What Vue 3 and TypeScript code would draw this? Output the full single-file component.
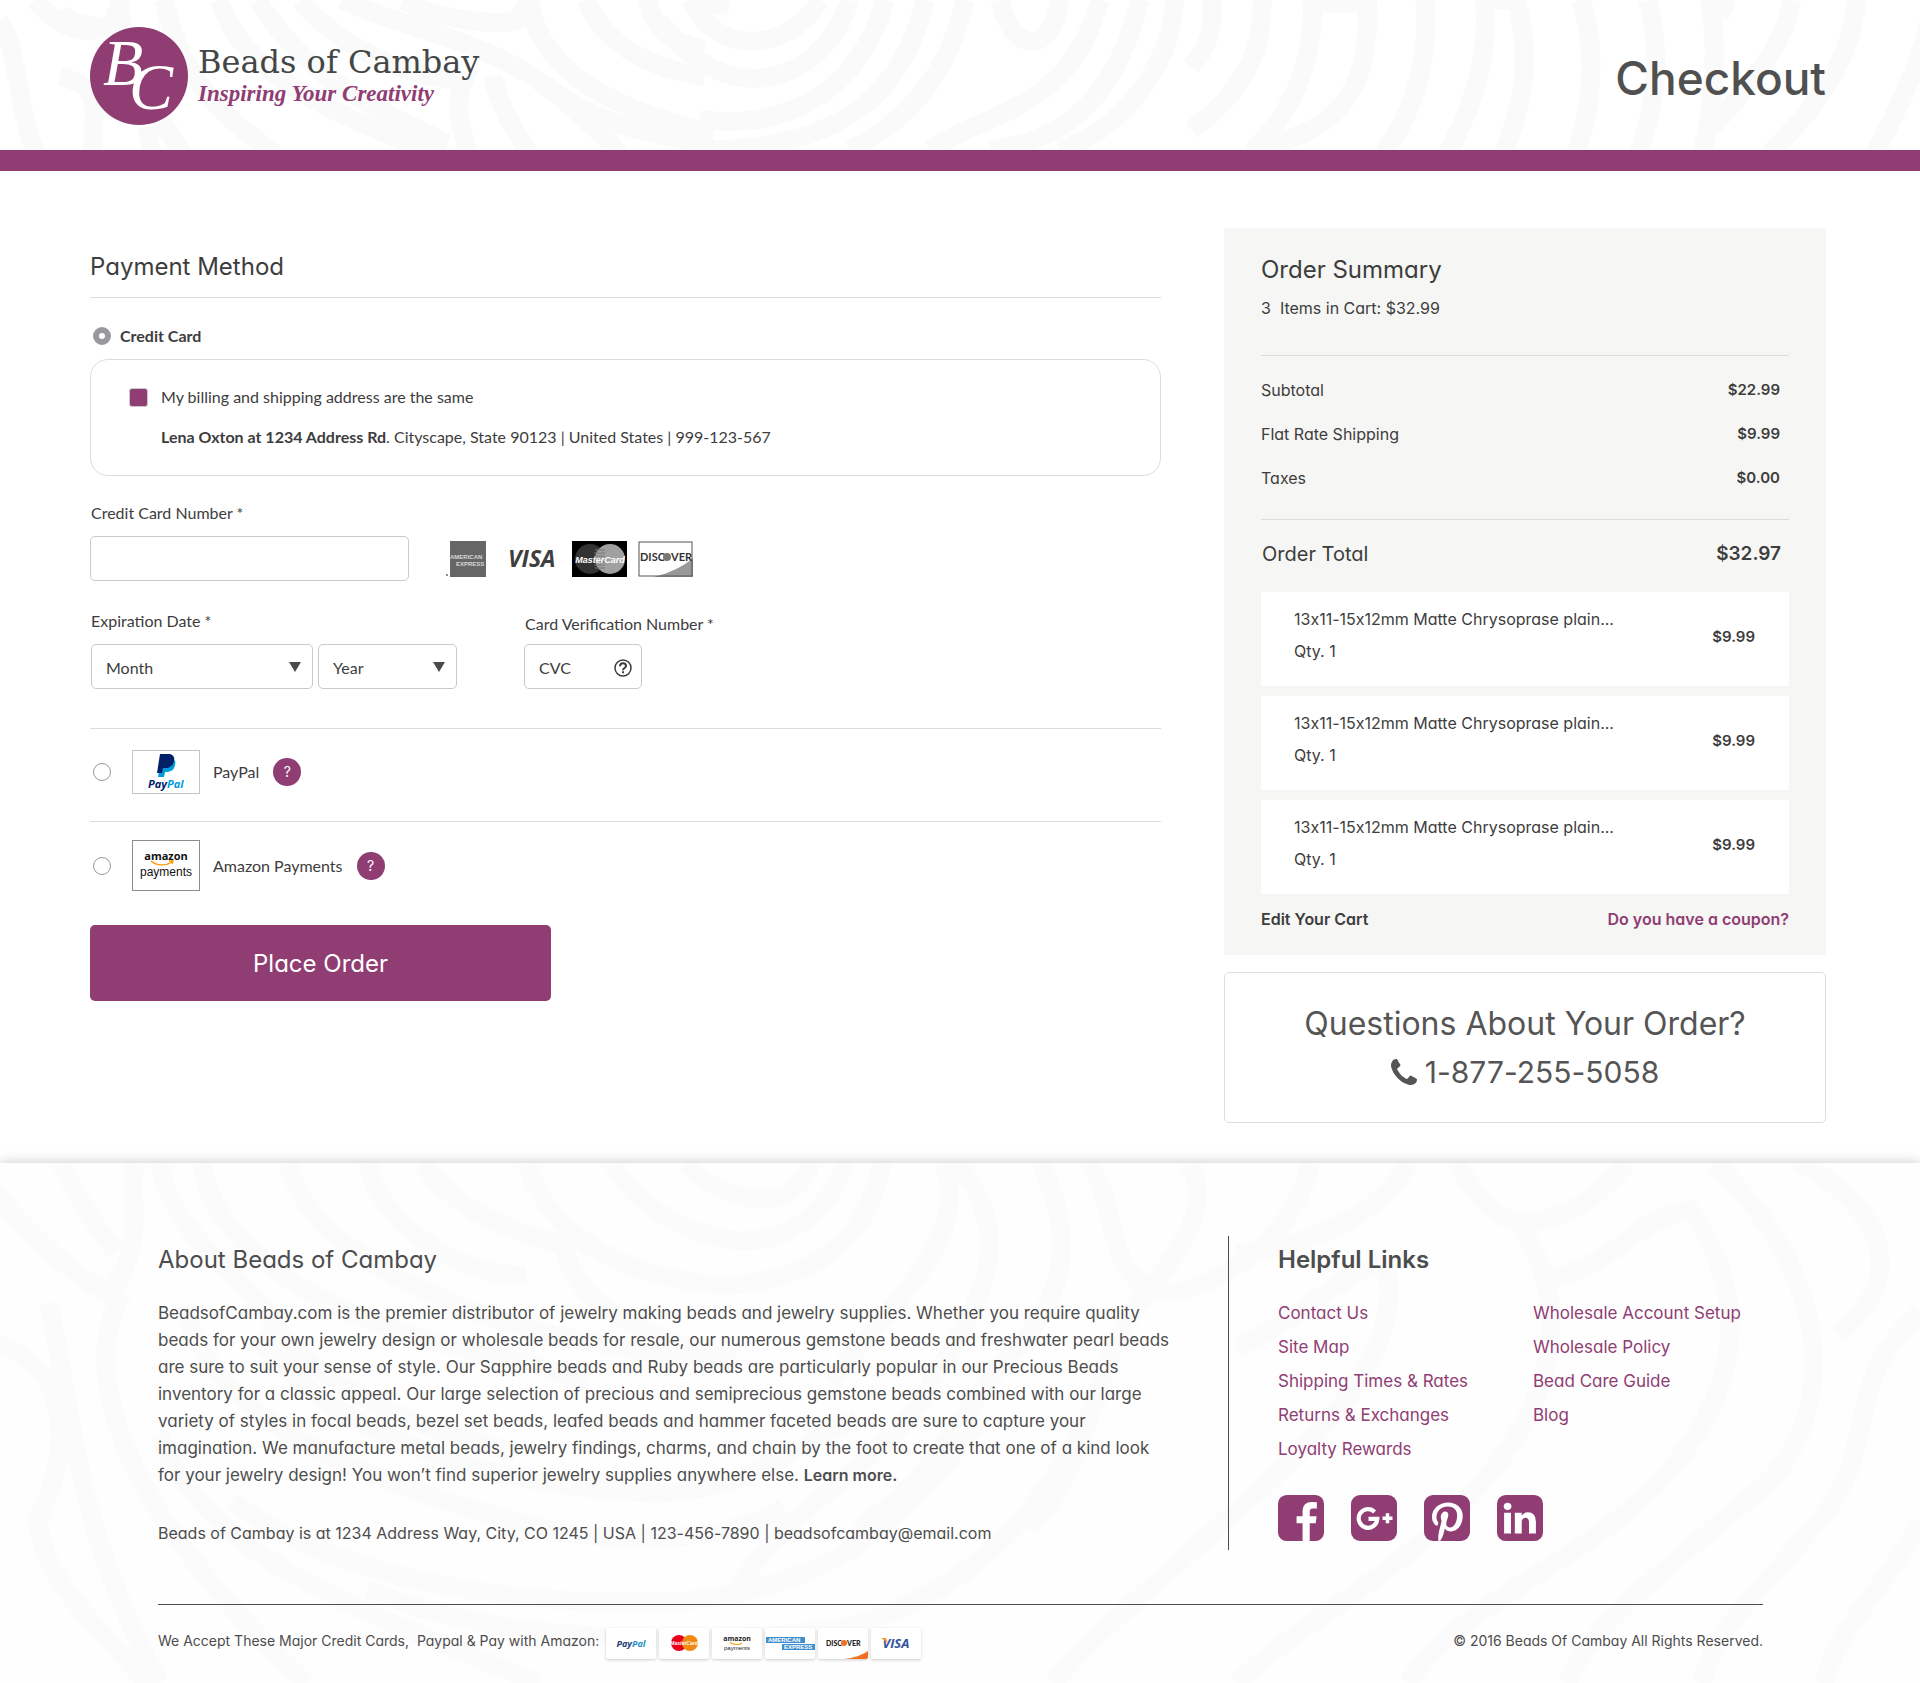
<script setup lang="ts">
import { ref } from 'vue'

interface CartItem {
  id: number
  name: string
  qty: number
  price: string
}

const method = ref<'card' | 'paypal' | 'amazon'>('card')
const sameAddress = ref(true)

const totals = [
  { label: 'Subtotal', value: '$22.99' },
  { label: 'Flat Rate Shipping', value: '$9.99' },
  { label: 'Taxes', value: '$0.00' },
]

const items: CartItem[] = [1, 2, 3].map((id) => ({
  id,
  name: '13x11-15x12mm Matte Chrysoprase plain...',
  qty: 1,
  price: '$9.99',
}))

const aboutLines = [
  'BeadsofCambay.com is the premier distributor of jewelry making beads and jewelry supplies. Whether you require quality',
  'beads for your own jewelry design or wholesale beads for resale, our numerous gemstone beads and freshwater pearl beads',
  'are sure to suit your sense of style. Our Sapphire beads and Ruby beads are particularly popular in our Precious Beads',
  'inventory for a classic appeal. Our large selection of precious and semiprecious gemstone beads combined with our large',
  'variety of styles in focal beads, bezel set beads, leafed beads and hammer faceted beads are sure to capture your',
  'imagination. We manufacture metal beads, jewelry findings, charms, and chain by the foot to create that one of a kind look',
]

const linkColumns = [
  ['Contact Us', 'Site Map', 'Shipping Times & Rates', 'Returns & Exchanges', 'Loyalty Rewards'],
  ['Wholesale Account Setup', 'Wholesale Policy', 'Bead Care Guide', 'Blog'],
]

// Wood-grain lines behind the header, grouped by the part of the band they sit in.
const headerLeft = [
  'M-150,60 C-100,150 -110,300 -60,460',
  'M-60,0 C-20,60 60,130 130,70 L150,0',
  'M0,40 C30,70 90,80 110,90',
  'M145,0 C150,200 250,360 300,460',
  'M0,230 C110,260 80,330 80,460',
  'M215,380 L225,460',
  'M255,0 C290,220 400,360 530,460',
  'M390,0 C450,220 640,330 940,470',
  'M485,0 C600,230 760,320 950,430',
  'M590,0 C680,140 860,240 990,240 C960,330 990,400 1000,460',
  'M690,0 C860,90 1000,110 1160,230 C1230,300 1350,400 1600,430',
  'M840,0 C920,60 1080,80 1120,60 L1150,0',
  'M1150,0 C1170,190 1320,320 1600,400',
  'M1290,0 C1330,120 1420,200 1580,230',
  'M1440,0 C1450,80 1500,130 1580,150',
  'M1550,0 L1640,20',
  'M1060,230 C1080,330 1120,400 1150,460',
  'M1190,250 C1260,330 1330,400 1370,460',
]
const headerMiddle = [
  'M690,0 C720,60 790,50 820,0',
  'M660,20 C720,110 820,90 850,0',
  'M700,120 C790,130 860,90 885,0',
  'M700,150 C820,150 900,110 925,0',
  'M850,150 C910,120 950,70 965,0',
  'M1000,0 C1010,50 1050,60 1060,0',
  'M930,150 C990,110 1070,110 1100,0',
  'M990,150 C1080,140 1120,80 1140,0',
  'M1060,150 C1120,130 1170,70 1175,0',
]
const headerRight = [
  'M25,0 C30,80 20,140 -20,200',
  'M135,0 C140,170 80,290 -20,390',
  'M245,0 C250,190 200,340 110,460',
  'M245,10 L365,10 C370,200 340,390 130,440',
  'M490,0 C500,170 470,330 400,460',
  'M620,0 C630,170 600,300 540,460',
  'M620,0 L690,0 C720,170 710,300 660,460',
  'M830,0 C865,150 855,310 820,460',
  'M975,0 C1005,150 995,310 955,460',
  'M1110,0 C1130,150 1120,300 1095,460',
  'M1110,0 L1160,30 M1290,0 C1270,150 1200,250 1110,390',
  'M1430,0 C1420,180 1340,330 1240,460',
  'M1590,60 C1560,220 1520,330 1470,460',
]
const footerLines = [
  'M-10,130 C30,300 70,420 90,440 C120,300 105,180 110,66',
  'M50,66 C60,150 80,260 95,320',
  'M40,470 C60,800 60,1100 130,1568',
  'M100,440 C60,700 110,1100 250,1568',
  'M130,66 C140,250 180,350 215,480 C240,640 300,800 420,900',
  'M-10,580 C60,640 60,900 30,1100 C40,1300 80,1400 120,1568',
  'M165,66 C170,250 230,420 300,520 C360,600 420,620 480,700',
  'M235,66 C250,280 320,400 390,500 C440,560 520,620 600,640',
  'M300,66 C310,250 380,400 430,390',
  'M345,66 C370,200 420,270 460,300 C470,480 520,560 600,640',
  'M430,66 C450,300 520,400 590,420 C680,400 710,250 720,66',
  'M500,66 C520,200 570,290 610,290 C650,290 680,180 690,66',
  'M560,66 C580,150 620,190 640,160 C655,130 660,90 662,66',
  'M150,480 C170,760 260,950 420,1100 C500,1180 600,1160 640,1060',
  'M210,560 C260,820 380,1000 540,1020 C620,1000 640,900 700,800',
  'M130,850 C170,1200 280,1340 440,1568',
  'M190,1040 C260,1250 420,1360 560,1330 C700,1290 760,1000 800,800',
  'M300,1300 C400,1440 560,1480 700,1400 C820,1260 860,1000 900,720',
  'M770,66 C800,300 700,560 680,700',
  'M780,66 C840,300 790,520 760,700 C740,900 620,1100 600,1330',
  'M850,66 C880,300 870,460 820,640 C780,800 760,1000 700,1120',
  'M890,66 C920,260 900,420 960,440 C1010,400 1060,250 1070,66',
  'M970,66 C990,160 970,300 940,420 C880,700 900,900 840,1120',
  'M1010,600 C1070,500 1080,420 1130,350 C1150,560 1100,800 1000,1100 C940,1300 900,1400 860,1568',
  'M1010,330 C1080,300 1130,200 1150,66',
  'M1190,66 C1210,200 1230,240 1250,240 C1300,200 1310,130 1330,66',
  'M1240,240 C1290,500 1270,800 1180,1100 C1120,1300 1060,1400 1010,1568',
  'M1270,400 C1330,330 1330,240 1380,200 C1440,500 1420,850 1300,1150 C1230,1320 1180,1400 1150,1568',
  'M1400,66 C1500,400 1500,800 1440,1000 C1340,1300 1300,1400 1280,1568',
  'M1470,66 C1540,200 1560,400 1500,560',
  'M1568,500 C1500,700 1540,900 1480,1120 C1440,1300 1400,1400 1390,1568',
  'M1568,1100 C1540,1300 1500,1400 1490,1568',
]
</script>

<template>
  <div class="page">
    <header class="header">
      <svg class="grain header-grain" viewBox="0 0 1920 150" preserveAspectRatio="xMidYMid slice" aria-hidden="true">
        <g transform="translate(60 0) scale(0.408 0.333)">
          <path v-for="d in headerLeft" :key="d" :d="d" />
        </g>
        <path v-for="d in headerMiddle" :key="d" :d="d" />
        <g transform="translate(1200 0) scale(0.459 0.333)">
          <path v-for="d in headerRight" :key="d" :d="d" />
        </g>
      </svg>
      <a class="brand" href="#" aria-label="Beads of Cambay home">
        <svg class="monogram" viewBox="0 0 98 98" aria-hidden="true">
          <circle cx="49" cy="49" r="49" fill="#8f3d73" />
          <text x="13" y="58" font-size="66">B</text>
          <text x="39" y="82" font-size="66">C</text>
        </svg>
        <span class="brand-text">
          <span class="brand-name">Beads of Cambay</span>
          <span class="brand-tag">Inspiring Your Creativity</span>
        </span>
      </a>
      <h1>Checkout</h1>
    </header>

    <main class="main">
      <form class="payment" @submit.prevent>
        <h2 class="rule-title">Payment Method</h2>

        <label class="card-choice">
          <input v-model="method" class="radio" type="radio" name="method" value="card" />
          <span>Credit Card</span>
        </label>

        <div class="address-box">
          <label class="same">
            <input v-model="sameAddress" class="check" type="checkbox" />
            <span>My billing and shipping address are the same</span>
          </label>
          <p class="address"><strong>Lena Oxton at 1234 Address Rd</strong>. Cityscape, State 90123 | United States | 999-123-567</p>
        </div>

        <div class="field number-field">
          <label for="cc-number">Credit Card Number *</label>
          <div class="number-row">
            <input id="cc-number" class="control" type="text" autocomplete="cc-number" />
            <div class="brands">
              <svg width="42" height="36" viewBox="0 0 42 36" role="img" aria-label="American Express">
                <rect x="5" width="36" height="36" fill="#666" />
                <g font-family="Liberation Sans" font-weight="bold" fill="#d8d8d8">
                  <text x="5" y="18" font-size="6">AMERICAN</text>
                  <text x="11" y="25" font-size="6">EXPRESS</text>
                </g>
                <circle cx="2" cy="34" r="1" fill="#666" />
              </svg>
              <svg class="visa" width="50" height="36" viewBox="0 0 50 36" role="img" aria-label="Visa">
                <text x="0" y="26" font-family="Open Sans" font-size="23" font-weight="bold" font-style="italic" fill="#3f3f3f">VISA</text>
              </svg>
              <svg width="55" height="36" viewBox="0 0 55 36" role="img" aria-label="MasterCard">
                <rect width="55" height="36" fill="#000" />
                <circle cx="18" cy="18" r="15" fill="#333" />
                <circle cx="38" cy="18" r="15" fill="#a0a0a0" />
                <path d="M23 9h10M22 12h11M22 15h11M22 18h11M22 21h11M22 24h11M23 27h10" stroke="#777" stroke-width="1" />
                <text x="28" y="22" text-anchor="middle" font-family="Liberation Sans" font-size="9" font-weight="bold" font-style="italic" fill="#fff">MasterCard</text>
              </svg>
              <svg width="55" height="36" viewBox="0 0 55 36" role="img" aria-label="Discover">
                <rect width="55" height="36" fill="#fff" />
                <path d="M16 36C32 32 46 25 55 17V36Z" fill="#999" />
                <rect x="1" y="1" width="53" height="34" fill="none" stroke="#555" stroke-width="1" />
                <text x="2" y="20" font-family="Lato" font-size="11" font-weight="bold" fill="#333">DISC</text>
                <circle cx="29" cy="16" r="4" fill="#777" />
                <text x="33" y="20" font-family="Lato" font-size="11" font-weight="bold" fill="#333">VER</text>
              </svg>
            </div>
          </div>
        </div>

        <div class="field-row">
          <fieldset class="expiry">
            <legend>Expiration Date *</legend>
            <div class="selects">
              <div class="select month">
                <select class="control" aria-label="Month"><option>Month</option></select>
                <svg width="12" height="10" viewBox="0 0 12 10" aria-hidden="true"><path d="M0 0H12L6 10Z" /></svg>
              </div>
              <div class="select year">
                <select class="control" aria-label="Year"><option>Year</option></select>
                <svg width="12" height="10" viewBox="0 0 12 10" aria-hidden="true"><path d="M0 0H12L6 10Z" /></svg>
              </div>
            </div>
          </fieldset>
          <div class="field cvc">
            <label for="cvc">Card Verification Number *</label>
            <div class="cvc-box">
              <input id="cvc" class="control" type="text" placeholder="CVC" autocomplete="cc-csc" />
              <svg width="18" height="18" viewBox="0 0 18 18" fill="none" stroke="#3d3d3d" stroke-width="2" aria-hidden="true">
                <circle cx="9" cy="9" r="8" stroke-width="1.5" />
                <path d="M6 7.2C6 5.2 7.4 4.2 9 4.2s3 1 3 2.7C12 9 9 9 9 11.2" />
                <path d="M9 12.3v2" />
              </svg>
            </div>
          </div>
        </div>

        <div class="alt paypal">
          <input id="m-paypal" v-model="method" class="radio" type="radio" name="method" value="paypal" />
          <svg class="alt-logo" width="68" height="44" viewBox="0 0 68 44" aria-hidden="true">
            <rect x="0" y="0" width="68" height="44" fill="#fff" stroke="#c4c4c4" stroke-width="2" />
            <path d="M32 9h9c2 1 3 3 2 6-1 5-4 7-9 7h-1l-1 5h-6l1-6z" fill="#009cde" />
            <path d="M28 4h8c5 0 7 3 6 7-1 5-4 7-9 7h-2l-1 5h-5z" fill="#012169" />
            <g font-family="Open Sans" font-size="11" font-weight="bold" font-style="italic">
              <text x="16" y="38" fill="#012169">Pay<tspan fill="#009cde">Pal</tspan></text>
            </g>
          </svg>
          <label for="m-paypal">PayPal</label>
          <button class="help" type="button" aria-label="About PayPal">?</button>
        </div>

        <div class="alt amazon">
          <input id="m-amazon" v-model="method" class="radio" type="radio" name="method" value="amazon" />
          <svg class="alt-logo" width="68" height="51" viewBox="0 0 68 51" aria-hidden="true">
            <rect width="68" height="51" fill="#fff" stroke="#8c8c91" stroke-width="2" />
            <g font-family="Liberation Sans" fill="#111" text-anchor="middle">
              <text x="34" y="20" font-family="Open Sans" font-size="11" font-weight="bold">amazon</text>
              <text x="34" y="36" font-size="12">payments</text>
            </g>
            <path d="M19 21C25 26 34 26 40 22M37 21L41 21L40 24" fill="none" stroke="#f90" stroke-width="1.4" />
          </svg>
          <label for="m-amazon">Amazon Payments</label>
          <button class="help" type="button" aria-label="About Amazon Payments">?</button>
        </div>

        <button class="place" type="submit">Place Order</button>
      </form>

      <aside class="side">
        <section class="summary">
          <h2>Order Summary</h2>
          <p class="count">3&nbsp; Items in Cart: $32.99</p>
          <table class="totals">
            <tbody>
              <tr v-for="row in totals" :key="row.label">
                <th scope="row">{{ row.label }}</th>
                <td>{{ row.value }}</td>
              </tr>
            </tbody>
          </table>
          <p class="grand"><span>Order Total</span><strong>$32.97</strong></p>
          <ul class="items">
            <li v-for="item in items" :key="item.id">
              <div>
                <p>{{ item.name }}</p>
                <p>Qty. {{ item.qty }}</p>
              </div>
              <strong>{{ item.price }}</strong>
            </li>
          </ul>
          <div class="cart-links">
            <a class="edit" href="#">Edit Your Cart</a>
            <a href="#">Do you have a coupon?</a>
          </div>
        </section>
        <section class="contact">
          <h2>Questions About Your Order?</h2>
          <a href="tel:18772555058">
            <svg width="26" height="26" viewBox="192 128 1408 1408" aria-hidden="true">
              <path d="M1600 1240q0 27-10 70.500t-21 68.500q-21 50-122 106-94 51-186 51-27 0-53-3.500t-57.500-12.500-47-14.500-55.500-20.500-49-18q-98-35-175-83-127-79-264-216t-216-264q-48-77-83-175-3-9-18-49t-20.500-55.500-14.500-47-12.500-57.500-3.500-53q0-92 51-186 56-101 106-122 25-11 68.500-21t70.500-10q14 0 21 3 18 6 53 76 11 19 30 54t35 63.500 31 53.500q3 4 17.500 25t21.500 35.500 7 28.500q0 20-28.500 50t-62 55-62 53-28.500 46q0 9 5 22.500t8.500 20.500 14 24 11.500 19q76 137 174 235t235 174q2 1 19 11.500t24 14 20.500 8.500 22.500 5q18 0 46-28.500t53-62 55-62 50-28.500q14 0 28.500 7t35.500 21.500 25 17.500q25 15 53.500 31t63.500 35 54 30q70 35 76 53 3 7 3 21z" />
            </svg>
            1-877-255-5058
          </a>
        </section>
      </aside>
    </main>

    <footer class="footer">
      <svg class="grain footer-grain" viewBox="0 0 1920 520" preserveAspectRatio="xMidYMin slice" aria-hidden="true">
        <g transform="scale(1.2245 0.3463) translate(0 -66)">
          <path v-for="d in footerLines" :key="d" :d="d" />
        </g>
      </svg>
      <div class="footer-cols">
        <section class="about">
          <h2>About Beads of Cambay</h2>
          <p>
            <template v-for="line in aboutLines" :key="line">{{ line }}<br /></template>
            for your jewelry design! You won’t find superior jewelry supplies anywhere else. <a href="#">Learn more.</a>
          </p>
          <p class="where">Beads of Cambay is at 1234 Address Way, City, CO 1245 | USA | 123-456-7890 | beadsofcambay@email.com</p>
        </section>
        <section class="links">
          <h2>Helpful Links</h2>
          <nav>
            <ul v-for="(column, i) in linkColumns" :key="i">
              <li v-for="link in column" :key="link"><a href="#">{{ link }}</a></li>
            </ul>
          </nav>
          <div class="social">
            <a href="#" aria-label="Facebook">
              <svg viewBox="128 128 1536 1536"><path d="M1376 128q119 0 203.500 84.500t84.500 203.500v960q0 119-84.500 203.500t-203.500 84.500h-188v-595h199l30-232h-229v-148q0-56 23.500-84t91.500-28l122-1v-207q-63-9-178-9-136 0-217.500 80t-81.500 226v171h-200v232h200v595h-532q-119 0-203.500-84.500t-84.500-203.500v-960q0-119 84.500-203.500t203.500-84.500h960z" /></svg>
            </a>
            <a href="#" aria-label="Google Plus">
              <svg viewBox="0 0 46 46">
                <rect width="46" height="46" rx="9" />
                <path d="M23.600 16.900A9.300 9.300 0 1 0 26.300 23.800H17.500" fill="none" stroke="#fff" stroke-width="4.200" />
                <path d="M31.500 23.300H41.500M36.500 18.300V28.300" stroke="#fff" stroke-width="3.600" />
              </svg>
            </a>
            <a href="#" aria-label="Pinterest">
              <svg viewBox="0 0 46 46">
                <rect width="46" height="46" rx="9" />
                <path transform="translate(8 7) scale(0.080)" fill="#fff" d="M204 6.500C101.400 6.500 0 74.900 0 185.600 0 256 39.600 296 63.600 296c9.900 0 15.600-27.600 15.600-35.400 0-9.300-23.700-29.100-23.700-67.800 0-80.400 61.200-137.400 140.400-137.400 68.100 0 118.500 38.700 118.500 109.800 0 53.100-21.300 152.700-90.300 152.700-24.900 0-46.200-18-46.200-43.800 0-37.800 26.400-74.400 26.400-113.400 0-66.200-93.900-54.200-93.900 25.800 0 16.800 2.100 35.400 9.600 50.700-13.800 59.400-42 147.900-42 209.100 0 18.900 2.700 37.500 4.500 56.400 3.400 3.800 1.700 3.400 6.900 1.500 50.400-69 48.600-82.500 71.400-172.800 12.300 23.400 44.100 36 69.300 36 106.200 0 153.900-103.500 153.900-196.800C384 71.300 298.200 6.500 204 6.500z" />
              </svg>
            </a>
            <a href="#" aria-label="LinkedIn">
              <svg viewBox="128 128 1536 1536"><path d="M365 1414h231v-694h-231v694zm246-908q-1-52-36-86t-93-34-94.500 34-36.500 86q0 51 35.500 85.500t92.500 34.500h1q59 0 95-34.500t36-85.500zm585 908h231v-398q0-154-73-233t-193-79q-136 0-209 117h2v-101h-231q3 66 0 694h231v-388q0-38 7-56 15-35 45-59.500t74-24.500q116 0 116 157v371zm468-998v960q0 119-84.500 203.500t-203.500 84.500h-960q-119 0-203.500-84.500t-84.500-203.500v-960q0-119 84.500-203.500t203.500-84.500h960q119 0 203.500 84.500t84.500 203.500z" /></svg>
            </a>
          </div>
        </section>
      </div>
      <div class="footer-bar">
        <span>We Accept These Major Credit Cards,&nbsp; Paypal &amp; Pay with Amazon:</span>
        <div class="accepted">
          <svg viewBox="0 0 50 31" role="img" aria-label="PayPal">
            <text x="25" y="19" text-anchor="middle" font-family="Open Sans" font-size="9" font-weight="bold" font-style="italic" fill="#1d3c78">Pay<tspan fill="#2790c3">Pal</tspan></text>
          </svg>
          <svg viewBox="0 0 50 31" role="img" aria-label="MasterCard">
            <circle cx="20" cy="15" r="8" fill="#e8001b" />
            <circle cx="31" cy="15" r="8" fill="#f08a13" />
            <text x="25" y="17" text-anchor="middle" font-family="Liberation Sans" font-size="5" font-weight="bold" font-style="italic" fill="#fff">MasterCard</text>
          </svg>
          <svg viewBox="0 0 50 31" role="img" aria-label="Amazon Payments">
            <g font-family="Open Sans" fill="#222" text-anchor="middle">
              <text x="25" y="13" font-size="7" font-weight="bold">amazon</text>
              <text x="25" y="22" font-family="Liberation Sans" font-size="6">payments</text>
            </g>
            <path d="M18 14.500C22 17 27 17 30 15" fill="none" stroke="#f90" stroke-width="1.200" />
          </svg>
          <svg viewBox="0 0 50 31" role="img" aria-label="American Express">
            <path d="M1 9H40V15H1zM17 16H50V22H17z" fill="#3f8fce" />
            <g font-family="Liberation Sans" font-size="6" font-weight="bold" fill="#fff">
              <text x="3" y="14">AMERICAN</text>
              <text x="19" y="21">EXPRESS</text>
            </g>
          </svg>
          <svg viewBox="0 0 50 31" role="img" aria-label="Discover">
            <path d="M26 31C36 30 44 27 50 23V31Z" fill="#f36f21" />
            <g font-family="Lato" font-size="7" font-weight="900" fill="#222">
              <text x="8" y="18">DISC</text>
              <text x="29" y="18">VER</text>
            </g>
            <circle cx="26" cy="15" r="3" fill="#f36f21" />
          </svg>
          <svg viewBox="0 0 50 31" role="img" aria-label="Visa">
            <text x="25" y="20" text-anchor="middle" font-family="Open Sans" font-size="13" font-weight="bold" font-style="italic" fill="#3552a0">VISA</text>
            <path d="M10 10h5l2 5z" fill="#f0a030" />
          </svg>
        </div>
        <span class="copyright">© 2016 Beads Of Cambay All Rights Reserved.</span>
      </div>
    </footer>
  </div>
</template>

<style>
body {
  margin: 0;
  background: #fff;
}
</style>

<style scoped>
.page {
  --purple: #8f3d73;
  --ink: #3d3d3d;
  --soft: #4d4d4d;
  --line: #dcdcdc;
  color: var(--ink);
  font-family: Inter, Lato, sans-serif;
  font-feature-settings: 'cv11', 'calt' 0;
  font-size: 16px;
  line-height: 24px;
}
.page *,
.page *::before {
  box-sizing: border-box;
}
h1,
h2,
p,
ul,
fieldset {
  margin: 0;
  padding: 0;
  border: 0;
  list-style: none;
}
h2 {
  font-size: 24px;
  line-height: 34px;
  font-weight: 400;
}
a {
  color: var(--purple);
  text-decoration: none;
}
button,
input,
select {
  font: inherit;
  color: inherit;
}

.grain {
  position: absolute;
  inset: 0;
  width: 100%;
  height: 100%;
  z-index: -1;
}
.grain path {
  fill: none;
  vector-effect: non-scaling-stroke;
  stroke-width: 19;
}
.header-grain {
  stroke: #fafafa;
}
.footer-grain {
  stroke: #fbfbfb;
}

.header {
  position: relative;
  z-index: 0;
  display: flex;
  align-items: center;
  justify-content: space-between;
  height: 171px;
  padding: 2px 94px 0 90px;
  border-bottom: 21px solid var(--purple);
  overflow: hidden;
}
.brand {
  display: flex;
  align-items: center;
  gap: 10px;
}
.monogram {
  width: 98px;
  height: 98px;
  overflow: visible;
}
.monogram text {
  font-family: 'Liberation Serif', serif;
  font-style: italic;
  fill: #fff;
}
.brand-text {
  display: flex;
  flex-direction: column;
}
.brand-name {
  color: #434645;
  font-family: 'DejaVu Serif', serif;
  font-size: 32px;
  line-height: 36px;
}
.brand-tag {
  font-family: 'Liberation Serif', serif;
  font-size: 23px;
  font-style: italic;
  font-weight: 700;
  line-height: 28px;
}
h1 {
  margin-top: 4px;
  color: #505050;
  font-size: 46px;
  font-weight: 500;
  line-height: 56px;
}

.main {
  display: grid;
  grid-template-columns: minmax(0, 1fr) 602px;
  gap: 63px;
  padding: 57px 94px 40px 90px;
}

.payment {
  padding-top: 22px;
  font-family: Lato, sans-serif;
}
.rule-title {
  padding-bottom: 13px;
  border-bottom: 1px solid var(--line);
  font-family: Inter, sans-serif;
}
.card-choice {
  display: flex;
  align-items: center;
  gap: 9px;
  margin-top: 26px;
  padding-left: 3px;
  font-weight: 700;
}
.radio {
  appearance: none;
  flex: none;
  width: 18px;
  height: 18px;
  margin: 0;
  border: 1px solid #999;
  border-radius: 50%;
  background: #fff;
}
.radio:checked {
  border: 6px solid #98989e;
}
.address-box {
  margin-top: 11px;
  padding: 25px 38px 26px;
  border: 1px solid var(--line);
  border-radius: 18px;
}
.same {
  display: flex;
  align-items: center;
  gap: 13px;
}
.check {
  appearance: none;
  width: 19px;
  height: 19px;
  margin: 0;
  border: 1px solid #c9c9c9;
  border-radius: 3px;
}
.check:checked {
  background: var(--purple);
}
.address {
  margin: 16px 0 0 32px;
}
.control {
  display: block;
  width: 100%;
  height: 45px;
  padding: 2px 14px 0;
  border: 1px solid #c9c9c9;
  border-radius: 5px;
  background: #fff;
  appearance: none;
  outline: 0;
}
.control::placeholder {
  color: inherit;
  opacity: 1;
}
.field label,
legend {
  display: block;
  padding: 0 0 0 1px;
}
.number-field {
  margin-top: 25px;
}
.number-row {
  display: flex;
  align-items: center;
  gap: 36px;
  margin-top: 11px;
}
.number-row .control {
  width: 319px;
}
.brands {
  display: flex;
  align-items: center;
  gap: 11px;
}
.visa {
  margin: 0 3px 0 10px;
}
.field-row {
  display: flex;
  gap: 67px;
  margin-top: 28px;
  padding-bottom: 39px;
  border-bottom: 1px solid var(--line);
}
.selects {
  display: flex;
  gap: 5px;
  margin: 11px 0 0 1px;
}
.select,
.cvc-box {
  position: relative;
}
.select svg,
.cvc-box svg {
  position: absolute;
  top: 18px;
  right: 12px;
  fill: #4a4a4a;
  pointer-events: none;
}
.month {
  width: 222px;
}
.year {
  width: 139px;
}
.cvc-box {
  width: 118px;
  margin-top: 8px;
}
.cvc {
  margin-top: 3px;
}
.cvc-box svg {
  top: 15px;
  right: 10px;
  fill: none;
}
.alt {
  display: flex;
  align-items: center;
  padding-left: 3px;
}
.alt-logo {
  margin: 0 13px 0 21px;
}
.paypal {
  padding-top: 21px;
  padding-bottom: 27px;
  border-bottom: 1px solid var(--line);
}
.amazon {
  padding-top: 18px;
}
.help {
  width: 28px;
  height: 28px;
  margin-left: 14px;
  padding: 0;
  border: 0;
  border-radius: 50%;
  background: var(--purple);
  color: #fff;
  font-family: Inter, sans-serif;
  font-size: 14px;
}
.place {
  width: 461px;
  height: 76px;
  margin-top: 34px;
  padding: 2px 0 0;
  border: 0;
  border-radius: 5px;
  background: var(--purple);
  color: #fff;
  font-family: Inter, sans-serif;
  font-size: 24px;
}

.summary {
  padding: 25px 37px 24px;
  background: #f6f6f4;
}
.count {
  margin-top: 9px;
}
.totals {
  display: block;
  margin: 35px 0 0;
  padding: 12px 0 19px;
  border-top: 1px solid var(--line);
  border-bottom: 1px solid var(--line);
}
.totals tbody {
  display: block;
}
.totals tr {
  display: flex;
  align-items: center;
  justify-content: space-between;
  height: 44px;
  padding-right: 9px;
}
.totals th {
  padding: 0;
  font-weight: 400;
}
.totals td {
  padding: 0;
  font-size: 15px;
  font-weight: 600;
}
strong {
  font-weight: 700;
}
.side strong {
  font-weight: 600;
}
.grand {
  display: flex;
  justify-content: space-between;
  margin-top: 20px;
  padding: 0 8px 0 1px;
  font-size: 20px;
  line-height: 28px;
}
.grand strong {
  font-size: 19px;
}
.items {
  display: grid;
  gap: 10px;
  margin-top: 24px;
}
.items li {
  display: flex;
  align-items: center;
  justify-content: space-between;
  padding: 15px 34px 19px 33px;
  background: #fff;
}
.items li > div {
  padding-bottom: 4px;
}
.items p + p {
  margin-top: 8px;
}
.items strong {
  font-size: 15px;
}
.cart-links {
  display: flex;
  justify-content: space-between;
  margin-top: 13px;
  font-size: 16px;
  font-weight: 600;
}
.edit {
  color: var(--ink);
}
.contact {
  display: flex;
  flex-direction: column;
  align-items: center;
  margin-top: 17px;
  padding: 27px 0 26px;
  border: 1px solid #ddd;
  border-radius: 5px;
  color: #555;
}
.contact h2,
.contact a {
  font-size: 32px;
  line-height: 48px;
}
.contact a {
  display: flex;
  align-items: center;
  gap: 8px;
  color: inherit;
  font-size: 30px;
}
.contact svg {
  fill: #555;
}

.footer {
  position: relative;
  z-index: 0;
  padding: 73px 157px 24px 158px;
  background: #fefefe;
  box-shadow: 0 0 12px rgba(0, 0, 0, 0.22);
  color: var(--soft);
}
.footer-cols {
  display: grid;
  grid-template-columns: 2fr 1fr;
}
.about {
  padding: 7px 0 3px;
}
.about p {
  margin-top: 23px;
  font-size: 17px;
  line-height: 27px;
  white-space: nowrap;
}
.about .where {
  margin-top: 31px;
  font-size: 16px;
}
.about a {
  color: inherit;
  font-size: 16px;
  font-weight: 600;
}
.links {
  padding: 7px 0 0 49px;
  border-left: 1px solid var(--soft);
}
.links h2 {
  font-weight: 600;
}
.links nav {
  display: grid;
  grid-template-columns: 255px 1fr;
  margin-top: 19px;
  font-size: 17px;
  line-height: 34px;
}
.social {
  display: flex;
  gap: 27px;
  margin-top: 29px;
}
.social svg {
  display: block;
  width: 46px;
  height: 46px;
  fill: var(--purple);
}
.footer-bar {
  display: flex;
  align-items: center;
  margin-top: 54px;
  padding-top: 23px;
  border-top: 1px solid var(--soft);
  font-size: 14px;
}
.footer-bar span {
  padding-bottom: 5px;
}
.accepted {
  display: flex;
  gap: 3px;
  margin-left: 7px;
}
.accepted svg {
  width: 50px;
  height: 31px;
  border-radius: 2px;
  background: #fff;
  box-shadow: 0 1px 3px rgba(0, 0, 0, 0.2);
}
.copyright {
  margin-left: auto;
}
</style>
